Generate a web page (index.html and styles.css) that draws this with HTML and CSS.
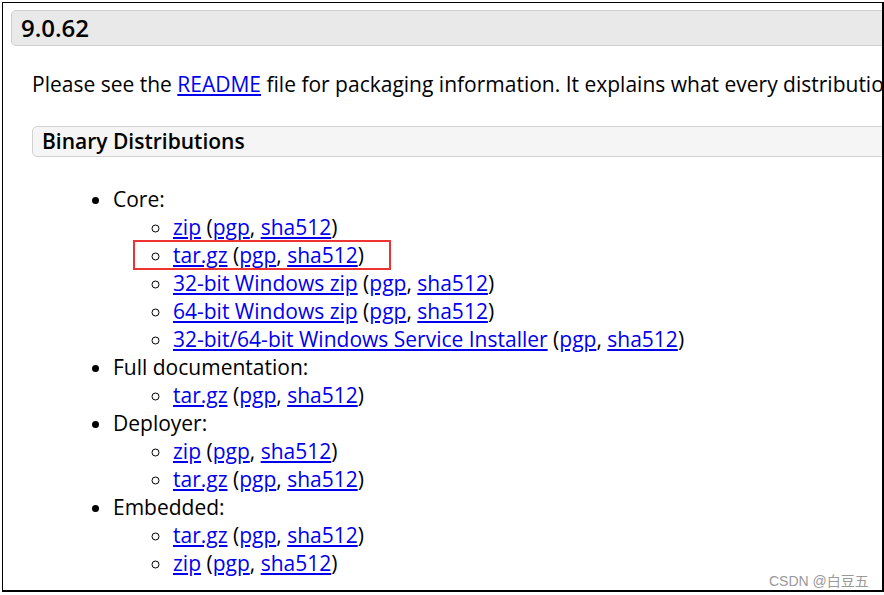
FILE: index.html
```html
<!DOCTYPE html>
<html>
<head>
<meta charset="utf-8">
<link rel="stylesheet" href="styles.css">
</head>
<body>
<div class="page">
  <h3 class="version">9.0.62</h3>
  <div class="content">
    <p class="intro">Please see the <a href="#">README</a> file for packaging information. It explains what every distribution contains.</p>
    <h4 class="section">Binary Distributions</h4>
    <ul class="dist">
      <li>Core:
        <ul class="sub">
          <li><a href="#">zip</a> (<a href="#">pgp</a>, <a href="#">sha512</a>)</li>
          <li class="marked"><a href="#">tar.gz</a> (<a href="#">pgp</a>, <a href="#">sha512</a>)</li>
          <li><a href="#">32-bit Windows zip</a> (<a href="#">pgp</a>, <a href="#">sha512</a>)</li>
          <li><a href="#">64-bit Windows zip</a> (<a href="#">pgp</a>, <a href="#">sha512</a>)</li>
          <li><a href="#">32-bit/64-bit Windows Service Installer</a> (<a href="#">pgp</a>, <a href="#">sha512</a>)</li>
        </ul>
      </li>
      <li>Full documentation:
        <ul class="sub">
          <li><a href="#">tar.gz</a> (<a href="#">pgp</a>, <a href="#">sha512</a>)</li>
        </ul>
      </li>
      <li>Deployer:
        <ul class="sub">
          <li><a href="#">zip</a> (<a href="#">pgp</a>, <a href="#">sha512</a>)</li>
          <li><a href="#">tar.gz</a> (<a href="#">pgp</a>, <a href="#">sha512</a>)</li>
        </ul>
      </li>
      <li>Embedded:
        <ul class="sub">
          <li><a href="#">tar.gz</a> (<a href="#">pgp</a>, <a href="#">sha512</a>)</li>
          <li><a href="#">zip</a> (<a href="#">pgp</a>, <a href="#">sha512</a>)</li>
        </ul>
      </li>
    </ul>
  </div>
</div>
<div class="frame"></div>
<div class="watermark">CSDN @白豆五</div>
</body>
</html>
```
FILE: styles.css
```css
html, body {
  margin: 0;
  padding: 0;
  width: 884px;
  height: 595px;
  overflow: hidden;
  background: #fff;
}
body {
  position: relative;
  font-family: "Open Sans", "Noto Sans", sans-serif;
  color: #000;
}
.page {
  padding: 10px 0 0 11px;
  width: 1000px;
}
.version {
  margin: 0;
  height: 34px;
  line-height: 34px;
  padding: 0 9px;
  font-size: 24px;
  font-weight: 600;
  background: #e9e9e9;
  border: 1px solid #cfcfcf;
  border-radius: 5px;
}
.content {
  margin-left: 21px;
}
.intro {
  margin: 24px 0 0 0;
  font-size: 21px;
  line-height: 28px;
  white-space: nowrap;
}
a {
  color: #0000ee;
  text-decoration: underline;
}
.section {
  margin: 28px 0 0 0;
  height: 29px;
  line-height: 29px;
  padding: 0 9px;
  font-size: 21px;
  font-weight: 600;
  background: #f5f5f5;
  border: 1px solid #d2d2d2;
  border-radius: 5px;
}
.dist {
  margin: 28px 0 0 0;
  padding-left: 81px;
  font-size: 21px;
  line-height: 28px;
  list-style: disc;
}
.sub {
  margin: 0;
  padding-left: 60px;
  list-style: circle;
}
.marked {
  position: relative;
}
.marked::after {
  content: "";
  position: absolute;
  left: -40px;
  top: -1px;
  width: 254px;
  height: 26px;
  border: 2px solid #ee3333;
}
.frame {
  position: absolute;
  left: 2px;
  top: 2px;
  width: 879px;
  height: 587px;
  border: 1px solid #000;
  border-width: 1px 2px 2px 1px;
  pointer-events: none;
}
.watermark {
  position: absolute;
  left: 769px;
  top: 570px;
  font-family: "Liberation Sans", "Noto Sans CJK SC", sans-serif;
  font-size: 14px;
  color: #999;
  white-space: nowrap;
}
```
